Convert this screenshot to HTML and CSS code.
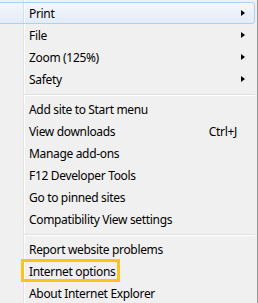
FILE: index.html
```html
<!DOCTYPE html>
<html>
<head>
<meta charset="utf-8">
<link rel="stylesheet" href="styles.css">
</head>
<body>
<div class="menu">
  <div class="item active"><span class="label">Print</span><span class="arrow"></span></div>
  <div class="item"><span class="label">File</span><span class="arrow"></span></div>
  <div class="item"><span class="label">Zoom (125%)</span><span class="arrow"></span></div>
  <div class="item"><span class="label">Safety</span><span class="arrow"></span></div>
  <div class="sep"></div>
  <div class="item"><span class="label">Add site to Start menu</span></div>
  <div class="item"><span class="label">View downloads</span><span class="shortcut">Ctrl+J</span></div>
  <div class="item"><span class="label">Manage add-ons</span></div>
  <div class="item"><span class="label">F12 Developer Tools</span></div>
  <div class="item"><span class="label">Go to pinned sites</span></div>
  <div class="item"><span class="label">Compatibility View settings</span></div>
  <div class="sep"></div>
  <div class="item"><span class="label">Report website problems</span></div>
  <div class="item"><span class="label callout">Internet options</span></div>
  <div class="item"><span class="label">About Internet Explorer</span></div>
</div>
</body>
</html>
```
FILE: styles.css
```css
html, body {
  margin: 0;
  padding: 0;
  background: #f0f0f0;
}
.menu {
  width: 257px;
  height: 303px;
  border-right: 1px solid #979797;
  padding-top: 2px;
  box-sizing: content-box;
  background:
    linear-gradient(to right, transparent 23px, #e2e3e3 23px, #e2e3e3 24px, #ffffff 24px, #ffffff 25px, transparent 25px),
    #f0f0f0;
  font-family: "Noto Sans", "Open Sans", sans-serif;
  font-size: 12px;
  letter-spacing: -0.33px;
  color: #000;
  overflow: hidden;
}
.item {
  display: flex;
  align-items: center;
  height: 22px;
  margin-left: -3px;
  margin-right: 2px;
  padding-left: 31px;
  box-sizing: border-box;
  border: 1px solid transparent;
  border-radius: 3px;
}
.item.active {
  border-color: #a9d1f5;
  background:
    linear-gradient(to right, transparent 25px, rgba(200,210,225,0.6) 25px, rgba(200,210,225,0.6) 26px, rgba(255,255,255,0.7) 26px, rgba(255,255,255,0.7) 27px, transparent 27px),
    linear-gradient(to bottom, #f3f7fc, #e3ecf8);
}
.label {
  display: inline-block;
  height: 20px;
  line-height: 22px;
  white-space: nowrap;
}
.arrow {
  margin-left: auto;
  margin-right: 9px;
  width: 0;
  height: 0;
  border-top: 3.5px solid transparent;
  border-bottom: 3.5px solid transparent;
  border-left: 4px solid #000;
}
.shortcut {
  margin-left: auto;
  margin-right: 17px;
  line-height: 22px;
  height: 20px;
}
.sep {
  height: 8px;
  margin-left: 24px;
  margin-right: 2px;
  box-sizing: border-box;
  padding-top: 4px;
}
.sep::before {
  content: "";
  display: block;
  height: 1px;
  background: #e0e0e0;
  border-bottom: 1px solid #ffffff;
}
.callout {
  position: relative;
}
.callout::after {
  content: "";
  position: absolute;
  left: -8px;
  right: -5px;
  top: -2px;
  bottom: -1px;
  border: 3px solid #fbc31b;
}
```
